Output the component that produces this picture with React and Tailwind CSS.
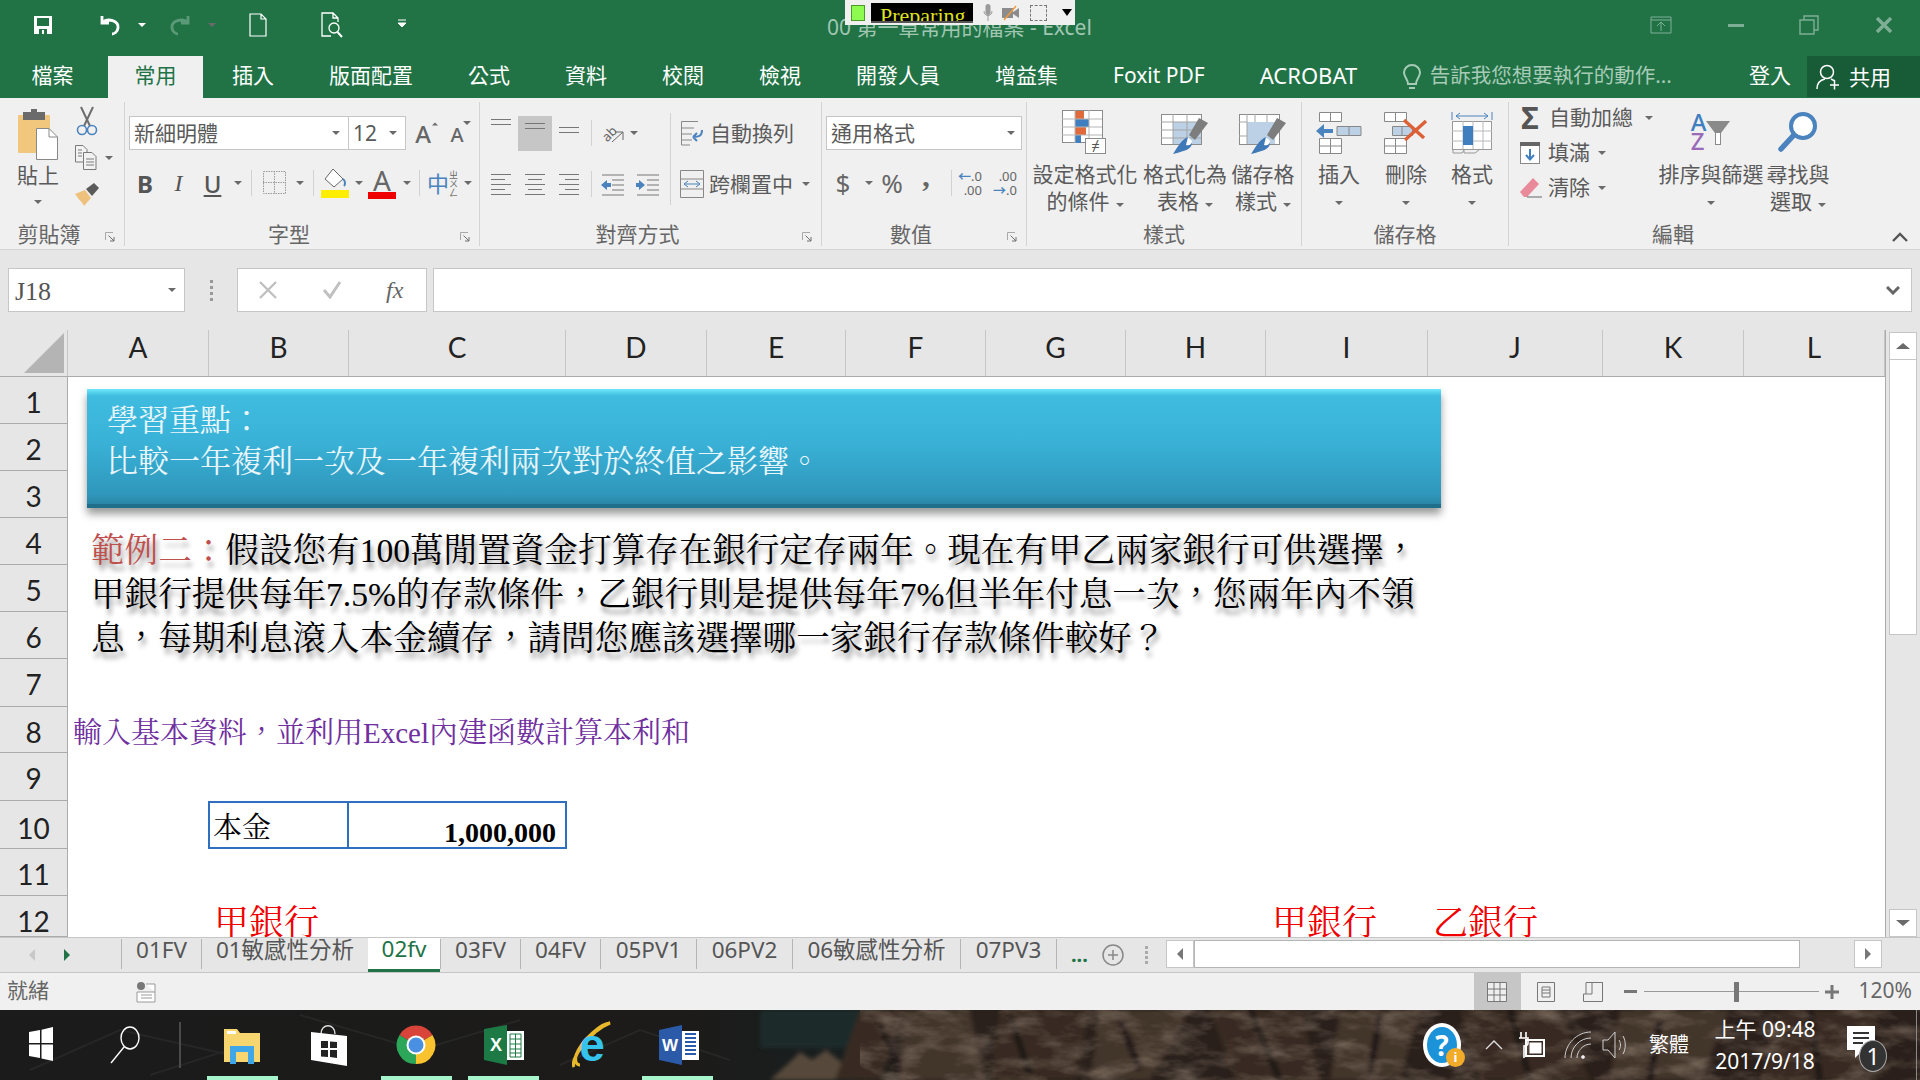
import React from 'react';

const UI = '"Noto Sans","Noto Sans CJK TC",sans-serif';

// little dropdown triangle used all over the ribbon
function Caret({ className = '' }) {
  return <span className={`inline-block w-0 h-0 border-x-[4px] border-t-[4px] border-x-transparent border-t-[#6a6a6a] ${className}`} />;
}

function Launcher() {
  return (
    <svg width="11" height="11" viewBox="0 0 11 11" className="absolute right-[8px] top-[10px]">
      <path d="M0.5 8V0.5H8" fill="none" stroke="#a8a8a8" />
      <path d="M3.5 3.5L9 9M9 5V9H5" fill="none" stroke="#6f6f6f" />
    </svg>
  );
}

function Group({ width, label, launcher, children, last }) {
  return (
    <div className={`${width} h-full shrink-0 flex flex-col ${last ? '' : 'border-r border-[#d4d4d4]'}`}>
      <div className="h-[120px] shrink-0">{children}</div>
      <div className={`relative h-[24px] text-center text-[21px] leading-[24px] text-[#666] ${launcher ? 'pr-[26px]' : ''}`}>
        {label}
        {launcher && <Launcher />}
      </div>
    </div>
  );
}

function Sep({ className = 'h-[26px]' }) {
  return <span className={`w-px bg-[#d2d2d2] shrink-0 ${className}`} />;
}

function Lines({ rows, align = 'left' }) {
  // paragraph alignment glyphs: rows is a list of line widths
  return (
    <svg width="24" height="26" viewBox="0 0 24 26">
      {rows.map((r, i) => {
        const x = align === 'left' ? 2 : align === 'right' ? 22 - r : 12 - r / 2;
        return <rect key={i} x={x} y={3 + i * 5} width={r} height="1" fill="#777" />;
      })}
    </svg>
  );
}

function Cut() {
  return (
    <svg width="24" height="32" viewBox="0 0 24 32">
      <path d="M6 2L15 21M18 2L9 21" stroke="#6d6d6d" strokeWidth="2" fill="none" />
      <circle cx="7" cy="25" r="4.5" fill="none" stroke="#4a83bd" strokeWidth="1.6" />
      <circle cx="17" cy="25" r="4.5" fill="none" stroke="#4a83bd" strokeWidth="1.6" />
    </svg>
  );
}

function Copy() {
  return (
    <svg width="24" height="28" viewBox="0 0 24 28" fill="#f2f2f2" stroke="#7a7a7a">
      <path d="M1.5 1.5H9l4 4V18H1.5z" />
      <path d="M9.5 8.5H18l4 4V25.5H9.5z" />
      <path d="M12 15h8M12 18h8M12 21h8M4 6h4M4 9h4M4 12h4" />
    </svg>
  );
}

function Painter() {
  return (
    <svg width="28" height="26" viewBox="0 0 28 26">
      <path d="M1 13L11 9L17 17L10 25C8 21 5 19 1 13Z" fill="#eec27c" />
      <path d="M12 8L20 2L25 7L18 15Z" fill="#5a5a5a" />
    </svg>
  );
}

function Paste() {
  return (
    <svg width="44" height="52" viewBox="0 0 44 52">
      <rect x="2" y="6" width="32" height="38" rx="1" fill="#f0c77d" />
      <rect x="7" y="3" width="22" height="8" fill="#6b6b6b" />
      <rect x="15" y="0" width="6" height="5" fill="#6b6b6b" />
      <path d="M20.5 19.5H33L41.5 28V50.5H20.5Z" fill="#fff" stroke="#888" />
      <path d="M33 19.5V28H41.5" fill="none" stroke="#888" />
    </svg>
  );
}

function CondFmt() {
  return (
    <svg width="50" height="46" viewBox="0 0 50 46">
      <rect x="0.5" y="0.5" width="40" height="32" fill="#fff" stroke="#8c8c8c" />
      <rect x="13" y="1" width="9" height="8" fill="#e06a3c" />
      <rect x="13" y="9" width="14" height="8" fill="#3f7fbf" />
      <rect x="13" y="17" width="11" height="8" fill="#e06a3c" />
      <rect x="13" y="25" width="6" height="8" fill="#3f7fbf" />
      <path d="M0 9h40M0 17h40M0 25h40M13 0v33M27 0v33" stroke="#b5b5b5" fill="none" />
      <rect x="23.5" y="28.5" width="20" height="15" fill="#fff" stroke="#8c8c8c" />
      <text x="33.5" y="41" fontSize="15" textAnchor="middle" fill="#555">≠</text>
    </svg>
  );
}

function TableFmt({ plain }) {
  return (
    <svg width="48" height="46" viewBox="0 0 48 46">
      <rect x="0.5" y="4.5" width="40" height="30" fill="#fff" stroke="#8c8c8c" />
      <rect x={plain ? 8 : 12} y="12" width="28" height="22" fill="#bcd0e6" />
      {plain
        ? <path d="M0 12h8M8 0M0 26h8M8 4v30M28 4v8M16 4v8" stroke="#a5a5a5" fill="none" />
        : <path d="M0 12h40M0 20h40M0 28h40M12 4v30M26 4v30" stroke="#a5a5a5" fill="none" />}
      <path d="M38 8L47 13L34 30L28 25Z" fill="#7d7d7d" />
      <path d="M27 27L31 33C31 39 24 41 12 44C16 38 20 30 27 27Z" fill="#3f79b8" />
      <path d="M27 27L31 31C31 35 27 36 25 35Z" fill="#fff" />
    </svg>
  );
}

function InsertIcon() {
  return (
    <svg width="46" height="44" viewBox="0 0 46 44">
      <path d="M3.5 1.5h22v9h-22zM14.5 1v9" fill="#fff" stroke="#888" />
      <path d="M21 15.5h24v9h-24zM33 15v9" fill="#bcd0e6" stroke="#888" />
      <path d="M0 20L8 13V18H17V22H8V27Z" fill="#4a83bd" />
      <path d="M3.5 27.5h22v15h-22zM14.5 27v15M3 35h22" fill="#fff" stroke="#888" />
    </svg>
  );
}

function DeleteIcon() {
  return (
    <svg width="46" height="44" viewBox="0 0 46 44">
      <path d="M1.5 1.5h22v9h-22zM12.5 1v9" fill="#fff" stroke="#888" />
      <path d="M9.5 15.5h20v9h-20zM19 15v9" fill="#bcd0e6" stroke="#888" />
      <path d="M1.5 27.5h22v15h-22zM12.5 27v15M1 35h22" fill="#fff" stroke="#888" />
      <path d="M21 9L41 27M43 10L22 29" stroke="#dc6137" strokeWidth="3.4" fill="none" />
    </svg>
  );
}

function FormatIcon() {
  return (
    <svg width="42" height="44" viewBox="0 0 42 44">
      <path d="M1 1v8M41 1v8M5 5h32M5 5l4-3M5 5l4 3M37 5l-4-3M37 5l-4 3" stroke="#4a83bd" fill="none" />
      <rect x="1.5" y="10.5" width="39" height="28" fill="#fff" stroke="#999" />
      <path d="M1 20h40M1 30h40M12 10v28M22 10v28M32 10v28" stroke="#b8b8b8" fill="none" />
      <rect x="12" y="15" width="10" height="19" fill="#3f7fbf" />
      <path d="M2 39v3h9l2-3M13 39v3h11l4-3" stroke="#999" fill="none" />
    </svg>
  );
}

function Borders() {
  return (
    <svg width="26" height="26" viewBox="0 0 26 26">
      <path d="M1.5 1.5h22v22h-22zM12.5 1v23M1 12.5h23" fill="none" stroke="#9a9a9a" strokeDasharray="1.5 1" />
    </svg>
  );
}

function FillColor() {
  return (
    <svg width="30" height="30" viewBox="0 0 30 30">
      <path d="M13 1L23 11L14 19L5 11Z" fill="#fff" stroke="#666" />
      <path d="M23 11C26 13 25 17 24 18" stroke="#4a83bd" strokeWidth="2" fill="none" />
      <rect x="1" y="22" width="28" height="8" fill="#ffee00" />
    </svg>
  );
}

function Sort() {
  return (
    <div className="flex items-start h-[42px]">
      <div className="flex flex-col text-[24px] leading-[19px] font-medium pt-[1px]">
        <span className="text-[#3f7fbf]">A</span>
        <span className="text-[#9a6bb8]">Z</span>
      </div>
      <svg width="26" height="30" viewBox="0 0 26 30" className="mt-[9px] -ml-[1px]">
        <path d="M1 1H25L16 13V25H10V13Z" fill="#8a8a8a" />
        <path d="M11 13H15V24H11Z" fill="#fff" />
      </svg>
    </div>
  );
}

function Find() {
  return (
    <svg width="42" height="42" viewBox="0 0 42 42">
      <circle cx="26" cy="15" r="12" fill="#fff" stroke="#4a83bd" strokeWidth="4" />
      <path d="M16 25L4 38" stroke="#4a83bd" strokeWidth="5.5" strokeLinecap="round" />
    </svg>
  );
}

function Win({ size = 24, color = '#fff' }) {
  return (
    <svg width={size} height={size * 1.5} viewBox="0 0 24 36">
      <path d="M0 6L11 4V17H0ZM12.5 3.7L24 1V17H12.5ZM0 18.5H11V32L0 30ZM12.5 18.5H24V35L12.5 32.5Z" fill={color} />
    </svg>
  );
}

function Wallpaper() {
  const rocks = [
    'M860 0L905 0L880 70L835 70Z', 'M905 0L970 0L985 70L900 70Z', 'M1000 0L1090 0L1075 70L990 70Z',
    'M1100 0L1190 0L1150 70L1090 70Z', 'M1210 0L1300 0L1320 70L1235 70Z', 'M1340 0L1420 0L1400 70L1330 70Z',
    'M1460 0L1560 0L1590 70L1480 70Z', 'M1620 0L1730 0L1700 70L1610 70Z', 'M1780 0L1880 0L1860 70L1760 70Z',
  ];
  return (
    <svg className="absolute inset-0" width="1920" height="70" viewBox="0 0 1920 70" preserveAspectRatio="none">
      <defs>
        <linearGradient id="wallFade" x1="0" x2="1" y1="0" y2="0">
          <stop offset="0" stopColor="#1b1b1b" />
          <stop offset="0.36" stopColor="#1c1b1a" />
          <stop offset="0.44" stopColor="#191f1f" />
          <stop offset="0.47" stopColor="#2a211c" />
          <stop offset="1" stopColor="#2a1f1a" />
        </linearGradient>
        <filter id="wallSoft"><feGaussianBlur stdDeviation="2" /></filter>
        <filter id="wallGrain" x="0" y="0" width="100%" height="100%">
          <feTurbulence type="fractalNoise" baseFrequency="0.025 0.06" numOctaves="4" seed="7" />
          <feColorMatrix values="0 0 0 0 0.30  0 0 0 0 0.23  0 0 0 0 0.18  1.3 0 0 0 -0.55" />
        </filter>
      </defs>
      <rect width="1920" height="70" fill="url(#wallFade)" />
      <g filter="url(#wallSoft)">
        <rect x="760" width="100" height="38" fill="#1a2c2b" />
        <path d="M770 70L790 52L800 42L812 50L826 40L845 55L860 70Z" fill="#57483b" />
        {rocks.map((d, i) => <path key={i} d={d} fill={i % 2 ? '#43352b' : '#382b23'} />)}
        <path d="M880 15L900 60M1010 5L1030 65M1120 10L1140 60M1250 0L1280 70M1380 5L1370 65M1510 0L1530 70M1660 10L1650 70M1810 0L1820 70" stroke="#1f1713" strokeWidth="6" fill="none" />
      </g>
      <rect x="860" width="1060" height="70" filter="url(#wallGrain)" />
      <path d="M30 60L120 20L230 45M300 5L420 40L520 10M560 55L640 20L730 50M150 65L260 30" stroke="#262626" strokeWidth="2" fill="none" />
      <rect x="1916" width="1" height="70" fill="#8a8a8a" />
    </svg>
  );
}

const ROWS = [
  { n: 1, h: 'h-[47px]' }, { n: 2, h: 'h-[47px]' }, { n: 3, h: 'h-[47px]' }, { n: 4, h: 'h-[47px]' },
  { n: 5, h: 'h-[47px]' }, { n: 6, h: 'h-[47px]' }, { n: 7, h: 'h-[48px]' }, { n: 8, h: 'h-[46px]' },
  { n: 9, h: 'h-[48px]' }, { n: 10, h: 'h-[48px]' }, { n: 11, h: 'h-[47px]' }, { n: 12, h: 'h-[41px]' },
];

const COLS = [
  ['A', 'w-[141px]'], ['B', 'w-[140px]'], ['C', 'w-[217px]'], ['D', 'w-[141px]'], ['E', 'w-[139px]'], ['F', 'w-[140px]'],
  ['G', 'w-[140px]'], ['H', 'w-[140px]'], ['I', 'w-[162px]'], ['J', 'w-[175px]'], ['K', 'w-[141px]'], ['L', 'w-[141px]'],
];

const TABS = [
  ['01FV', 'w-[80px]'], ['01敏感性分析', 'w-[167px]'], ['02fv', 'w-[72px]', true], ['03FV', 'w-[80px]'], ['04FV', 'w-[80px]'],
  ['05PV1', 'w-[96px]'], ['06PV2', 'w-[96px]'], ['06敏感性分析', 'w-[168px]'], ['07PV3', 'w-[96px]'],
];

const SERIF = { fontFamily: '"Liberation Serif","Noto Serif CJK TC","Noto Sans CJK TC",serif' };

export default function App() {
  return (
    <div className="w-[1920px] h-[1080px] overflow-hidden flex flex-col bg-[#e6e6e6] text-[#555]" style={{ fontFamily: UI }}>
      {/* title bar */}
      <div className="relative h-[56px] shrink-0 bg-[#217346] flex items-center pb-[6px] text-white">
        <div className="w-[84px] flex justify-end pr-[31px]">
          <svg width="20" height="20" viewBox="0 0 20 20">
            <path d="M1 1H19V19H1Z" fill="#fff" />
            <rect x="4" y="3" width="12" height="8" fill="#217346" />
            <rect x="6" y="14" width="8" height="5" fill="#217346" />
            <rect x="9" y="15" width="2" height="4" fill="#fff" />
          </svg>
        </div>
        <div className="ml-[6px] w-[40px] flex justify-center">
          <svg width="24" height="24" viewBox="0 0 24 24" fill="none" stroke="#fff" strokeWidth="2.8">
            <path d="M4 3V10H11M4 10C10 4 21 8 20 15C19.5 19 16 21 14 21" />
          </svg>
        </div>
        <Caret className="ml-[8px] border-t-white" />
        <div className="w-[22px]" />
        <svg width="24" height="24" viewBox="0 0 24 24" fill="none" stroke="#5b9a78" strokeWidth="2.8">
          <path d="M20 3V10H13M20 10C14 4 3 8 4 15C4.5 19 8 21 10 21" />
        </svg>
        <Caret className="ml-[16px] border-t-[#5b9a78]" />
        <div className="w-[33px]" />
        <svg width="18" height="24" viewBox="0 0 18 24" fill="none" stroke="#fff" strokeWidth="1.2">
          <path d="M1 1H12L17 6V23H1ZM12 1V6H17" />
        </svg>
        <div className="w-[54px]" />
        <svg width="24" height="26" viewBox="0 0 24 26" fill="none" stroke="#fff" strokeWidth="1.3">
          <path d="M10 24H1V1H12L17 6V10M12 1V6H17" />
          <circle cx="13" cy="16" r="5" />
          <path d="M16.5 20L21 25" strokeWidth="2" />
        </svg>
        <div className="w-[52px]" />
        <svg width="10" height="12" viewBox="0 0 10 12"><path d="M1 1H9M1 4L5 8L9 4Z" stroke="#fff" fill="#fff" /></svg>
        <div className="ml-[420px] mt-[6px] text-[21px] text-[#a0c6b2] whitespace-nowrap">00 第一章常用的檔案 - Excel</div>
        <div className="ml-auto flex items-center pr-[28px] text-[#7fae96]">
          <svg width="22" height="18" viewBox="0 0 22 18" fill="none" stroke="#7fae96"><path d="M1 1H21V17H1ZM1 4H21M11 15V7M7 10L11 6L15 10" /></svg>
          <span className="w-[32px] h-[3px] bg-[#7fae96] ml-[48px] scale-x-[.5]" />
          <svg width="20" height="20" viewBox="0 0 20 20" fill="none" stroke="#7fae96" strokeWidth="1.4" className="ml-[47px]"><path d="M5 5V1H19V15H15M1 5H15V19H1Z" /></svg>
          <svg width="16" height="16" viewBox="0 0 16 16" stroke="#7fae96" strokeWidth="3.4" className="ml-[57px]"><path d="M1 1L15 15M15 1L1 15" /></svg>
        </div>
        {/* screen recorder widget over the title */}
        <div className="absolute left-[845px] top-0 w-[230px] h-[25px] bg-[#f0f0f0] flex items-center">
          <span className="ml-[6px] w-[14px] h-[16px] bg-[#8dfb4f] border border-[#4d9a2a]" />
          <div className="ml-[6px] w-[102px] h-[20px] bg-black border-b-2 border-[#555] overflow-hidden text-[#dfe020] text-[22px] leading-[26px] pl-[9px]" style={SERIF}>
            Preparing
          </div>
          <svg width="10" height="18" viewBox="0 0 10 18" className="ml-[10px]"><rect x="2.5" y="0" width="5" height="11" rx="2.5" fill="#9a9a9a" /><path d="M5 11V17M1 7C1 13 9 13 9 7" stroke="#9a9a9a" fill="none" /></svg>
          <svg width="18" height="16" viewBox="0 0 18 16" className="ml-[9px]"><rect y="3" width="11" height="10" fill="#8c8c8c" /><path d="M11 7L17 3V13L11 9Z" fill="#8c8c8c" /><path d="M2 15L14 1" stroke="#ee9a3c" strokeWidth="1.5" /></svg>
          <span className="ml-[10px] w-[17px] h-[16px] border border-dashed border-[#777]" />
          <Caret className="ml-[15px] border-x-[5px] border-t-[7px] border-t-black" />
        </div>
      </div>

      {/* tabs */}
      <div className="h-[42px] shrink-0 bg-[#217346] flex items-stretch text-[21px] text-white leading-[38px]">
        <div className="ml-[5px] mr-[8px] px-[26.5px]">檔案</div>
        <div className="px-[26.5px] mr-[1.5px] bg-[#f0f0f0] text-[#217346]">常用</div>
        {['插入', '版面配置', '公式', '資料', '校閱', '檢視', '開發人員', '增益集', 'Foxit PDF'].map(t => (
          <div key={t} className="px-[27.5px] whitespace-nowrap">{t}</div>
        ))}
        <div className="px-[27.5px] text-[22px] whitespace-nowrap">ACROBAT</div>
        <svg width="20" height="28" viewBox="0 0 20 28" fill="none" stroke="#a7cbb7" strokeWidth="2" className="ml-[17px] mt-[8px]">
          <path d="M6 20C6 15 2 13 2 8.5A8 7.5 0 0 1 18 8.5C18 13 14 15 14 20ZM7 24H13" />
        </svg>
        <div className="ml-[8px] text-[20.5px] text-[#a7cbb7] whitespace-nowrap">告訴我您想要執行的動作...</div>
        <div className="ml-auto mr-[16px]">登入</div>
        <div className="w-[113px] bg-[#185c37] flex items-center mb-[1px]">
          <svg width="24" height="26" viewBox="0 0 24 26" fill="none" stroke="#fff" strokeWidth="1.5" className="ml-[9px]">
            <circle cx="11" cy="8" r="6.5" />
            <path d="M1 25C1 19 4 16 9 15M15 15L19 17M14 21H23M18.5 16.5V25.5" />
          </svg>
          <span className="ml-[9px]">共用</span>
        </div>
      </div>

      {/* ribbon */}
      <div className="h-[152px] shrink-0 bg-[#f0f0f0] border-b border-[#d4d4d4] flex pt-[4px] pb-[3px] text-[21px] leading-[27px] text-[#5a5a5a]">
        <Group width="w-[125px]" label="剪貼簿" launcher>
          <div className="flex h-full">
            <div className="w-[74px] flex flex-col items-center pl-[2px] pt-[7px]">
              <Paste />
              <span className="mt-[1px]">貼上</span>
              <Caret className="mt-[11px]" />
            </div>
            <div className="flex flex-col items-start pt-[3px]">
              <div className="ml-[1px]"><Cut /></div>
              <div className="mt-[7px] flex items-center"><Copy /><Caret className="ml-[7px]" /></div>
              <div className="mt-[9px]"><Painter /></div>
            </div>
          </div>
        </Group>

        <Group width="w-[355px]" label="字型" launcher>
          <div className="flex items-center mt-[14px] ml-[4px] h-[34px]">
            <div className="w-[220px] h-full bg-white border border-[#c6c6c6] flex items-center justify-between px-[4px] pr-[8px]">新細明體<Caret /></div>
            <div className="w-[57px] h-full bg-white border border-l-0 border-[#c6c6c6] flex items-center justify-between px-[4px] pr-[8px]">12<Caret /></div>
            <div className="relative w-[34px] text-center text-[24px] font-medium text-[#666]">A<Caret className="absolute right-[1px] top-[2px] rotate-180 border-t-[#4a83bd] scale-75" /></div>
            <div className="relative w-[34px] text-center text-[20px] font-medium text-[#666] pt-[2px]">A<Caret className="absolute right-[3px] top-[2px] border-t-[#4a83bd]" /></div>
          </div>
          <div className="flex items-center mt-[16px] ml-[3px] h-[34px] text-[24px] text-[#555]">
            <span className="w-[34px] text-center font-bold">B</span>
            <span className="w-[33px] text-center italic" style={SERIF}>I</span>
            <span className="w-[35px] text-center underline font-medium">U</span>
            <span className="w-[16px] flex justify-center"><Caret /></span>
            <Sep className="h-[26px] ml-[5px]" />
            <span className="ml-[10px]"><Borders /></span>
            <span className="w-[24px] flex justify-center"><Caret /></span>
            <Sep className="h-[26px] ml-[1px]" />
            <span className="ml-[6px]"><FillColor /></span>
            <span className="w-[18px] flex justify-center"><Caret /></span>
            <div className="flex flex-col items-center w-[28px] text-[28px] leading-[24px] text-[#666]">A<span className="w-full h-[7px] bg-[#ee0000]" /></div>
            <span className="w-[22px] flex justify-center"><Caret /></span>
            <Sep className="h-[26px] ml-[1px]" />
            <div className="ml-[7px] flex items-center text-[#4a83bd]">
              <span className="text-[22px]">中</span>
              <span className="flex flex-col text-[9px] leading-[9px] text-[#666]"><span>ㄓ</span><span>ㄨ</span><span>ㄥ</span></span>
            </div>
            <span className="ml-[6px] flex justify-center"><Caret /></span>
          </div>
        </Group>

        <Group width="w-[342px]" label="對齊方式" launcher>
          <div className="flex h-full">
            <div className="w-[190px] shrink-0">
              <div className="flex items-center mt-[13px] ml-[4px] h-[36px]">
                <span className="w-[34px] flex justify-center -mt-[8px]"><Lines rows={[20, 20]} align="center" /></span>
                <span className="w-[34px] h-[35px] flex items-center justify-center bg-[#c6c6c6]"><Lines rows={[20, 20]} align="center" /></span>
                <span className="w-[34px] flex justify-center mt-[8px]"><Lines rows={[20, 20]} align="center" /></span>
                <Sep className="h-[26px] ml-[5px]" />
                <svg width="26" height="26" viewBox="0 0 26 26" fill="none" className="ml-[8px]">
                  <text x="2" y="18" fontSize="13" fill="#666" transform="rotate(-45 10 14)">ab</text>
                  <path d="M12 22L23 12M23 12V20M23 12H15" stroke="#666" />
                </svg>
                <span className="ml-[4px] flex"><Caret /></span>
              </div>
              <div className="flex items-center mt-[15px] ml-[4px] h-[36px]">
                <span className="w-[34px] flex justify-center"><Lines rows={[20, 14, 20, 14, 20]} /></span>
                <span className="w-[34px] flex justify-center"><Lines rows={[20, 14, 20, 14, 20]} align="center" /></span>
                <span className="w-[34px] flex justify-center"><Lines rows={[20, 14, 20, 14, 20]} align="right" /></span>
                <Sep className="h-[26px] ml-[5px]" />
                <svg width="26" height="26" viewBox="0 0 26 26" className="ml-[8px]">
                  <path d="M2 4H24M12 9H24M12 14H24M12 19H24M2 24H24" stroke="#777" fill="none" />
                  <path d="M1 14L7 9V12H11V16H7V19Z" fill="#4a83bd" />
                </svg>
                <svg width="26" height="26" viewBox="0 0 26 26" className="ml-[9px]">
                  <path d="M2 4H24M12 9H24M12 14H24M12 19H24M2 24H24" stroke="#777" fill="none" />
                  <path d="M10 14L4 9V12H1V16H4V19Z" fill="#4a83bd" />
                </svg>
              </div>
            </div>
            <Sep className="h-[92px] mt-[11px]" />
            <div className="flex-1">
              <div className="flex items-center mt-[13px] ml-[9px] h-[36px]">
                <svg width="24" height="26" viewBox="0 0 24 26" fill="none" className="mr-[6px]">
                  <path d="M1.5 1.5H18M1.5 1.5V25H10M1.5 8H14M1.5 14H12M1.5 20H12" stroke="#888" />
                  <path d="M22 10C22 16 19 17 13 17M13 17L17 13M13 17L17 21" stroke="#4a83bd" strokeWidth="2" />
                </svg>
                自動換列
              </div>
              <div className="flex items-center mt-[15px] ml-[9px] h-[36px]">
                <svg width="24" height="28" viewBox="0 0 24 28" fill="none" className="mr-[5px]">
                  <path d="M.5 .5H23.5V27.5H.5ZM0 9H24M0 19H24" stroke="#888" />
                  <path d="M4 14H20M4 14L8 11M4 14L8 17M20 14L16 11M20 14L16 17" stroke="#4a83bd" />
                </svg>
                跨欄置中
                <Caret className="ml-[9px]" />
              </div>
            </div>
          </div>
        </Group>

        <Group width="w-[205px]" label="數值" launcher>
          <div className="ml-[4px] mt-[14px] w-[196px] h-[34px] bg-white border border-[#c6c6c6] flex items-center justify-between px-[4px] pr-[6px]">通用格式<Caret /></div>
          <div className="flex items-center mt-[16px] ml-[8px] h-[34px] text-[#666]">
            <span className="w-[26px] text-center text-[26px]">$</span>
            <Caret className="ml-[9px]" />
            <span className="ml-[2px] w-[34px] text-center text-[26px]">%</span>
            <span className="w-[34px] text-center text-[30px] font-bold leading-[16px] pb-[15px]" style={SERIF}>,</span>
            <Sep className="h-[26px] ml-[8px]" />
            <span className="ml-[2px] w-[28px] flex flex-col items-end text-[13px] leading-[14px]"><span><span className="text-[#4a83bd] font-bold">←</span>.0</span><span>.00</span></span>
            <span className="ml-[7px] w-[28px] flex flex-col items-end text-[13px] leading-[14px]"><span>.00</span><span><span className="text-[#4a83bd] font-bold">→</span>.0</span></span>
          </div>
        </Group>

        <Group width="w-[275px]" label="樣式">
          <div className="flex ml-[3px] text-center">
            <div className="w-[110px] flex flex-col items-center pt-[8px]"><div className="h-[48px] pl-[4px]"><CondFmt /></div><div className="mt-[3px] whitespace-nowrap">設定格式化</div><div>的條件<Caret className="ml-[6px] mb-[2px]" /></div></div>
            <div className="w-[90px] flex flex-col items-center pt-[8px]"><div className="h-[48px]"><TableFmt /></div><div className="mt-[3px] whitespace-nowrap">格式化為</div><div>表格<Caret className="ml-[6px] mb-[2px]" /></div></div>
            <div className="w-[66px] flex flex-col items-center pt-[8px]"><div className="h-[48px]"><TableFmt plain /></div><div className="mt-[3px] whitespace-nowrap">儲存格</div><div>樣式<Caret className="ml-[6px] mb-[2px]" /></div></div>
          </div>
        </Group>

        <Group width="w-[207px]" label="儲存格">
          <div className="flex ml-[3px] text-center">
            <div className="w-[68px] flex flex-col items-center pt-[9px]"><div className="h-[47px]"><InsertIcon /></div><div className="mt-[3px]">插入</div><Caret className="mt-[13px]" /></div>
            <div className="w-[66px] flex flex-col items-center pt-[9px]"><div className="h-[47px]"><DeleteIcon /></div><div className="mt-[3px]">刪除</div><Caret className="mt-[13px]" /></div>
            <div className="w-[66px] flex flex-col items-center pt-[9px]"><div className="h-[47px]"><FormatIcon /></div><div className="mt-[3px]">格式</div><Caret className="mt-[13px]" /></div>
          </div>
        </Group>

        <Group width="w-[328px]" label="編輯" last>
          <div className="flex h-full">
            <div className="w-[149px] shrink-0">
              <div className="h-[35px] flex items-center -mt-[2px]"><span className="w-[22px] ml-[10px] text-center text-[30px] leading-[30px] font-bold text-[#555]">Σ</span><span className="ml-[8px]">自動加總</span><Caret className="ml-[12px]" /></div>
              <div className="h-[35px] flex items-center">
                <svg width="20" height="22" viewBox="0 0 20 22" className="ml-[11px]">
                  <rect x=".5" y=".5" width="19" height="21" fill="#fff" stroke="#888" />
                  <rect width="20" height="4" fill="#666" />
                  <path d="M10 7V17M6 13L10 17.5L14 13" stroke="#3f7fbf" strokeWidth="2" fill="none" />
                </svg>
                <span className="ml-[8px]">填滿</span><Caret className="ml-[8px]" />
              </div>
              <div className="h-[35px] flex items-center">
                <svg width="24" height="24" viewBox="0 0 24 24" className="ml-[10px]">
                  <path d="M1 16L14 2L20 8L8 21H5Z" fill="#e98a9a" />
                  <path d="M8 21H23" stroke="#666" />
                </svg>
                <span className="ml-[5px]">清除</span><Caret className="ml-[8px]" />
              </div>
            </div>
            <div className="w-[106px] flex flex-col items-center pt-[9px]"><div className="h-[47px]"><Sort /></div><div className="mt-[3px] whitespace-nowrap">排序與篩選</div><Caret className="mt-[13px]" /></div>
            <div className="w-[66px] ml-[1px] flex flex-col items-center pt-[9px]"><div className="h-[47px]"><Find /></div><div className="mt-[3px] whitespace-nowrap">尋找與</div><div>選取<Caret className="ml-[6px] mb-[2px]" /></div></div>
          </div>
        </Group>
        <div className="flex-1 flex items-end justify-end pr-[12px] pb-[4px]">
          <svg width="16" height="10" viewBox="0 0 16 10"><path d="M1 9L8 2L15 9" fill="none" stroke="#555" strokeWidth="2.4" /></svg>
        </div>
      </div>

      {/* formula bar */}
      <div className="h-[80px] shrink-0 flex items-center">
        <div className="ml-[8px] w-[177px] h-[44px] bg-white border border-[#c6c6c6] flex items-center justify-between pl-[6px] pr-[8px] text-[26px] text-[#555]" style={SERIF}>
          <span className="pt-[3px]">J18</span><Caret />
        </div>
        <div className="w-[52px] flex flex-col items-center gap-[3px]"><span className="w-[3px] h-[3px] bg-[#999]" /><span className="w-[3px] h-[3px] bg-[#999]" /><span className="w-[3px] h-[3px] bg-[#999]" /><span className="w-[3px] h-[3px] bg-[#999]" /></div>
        <div className="w-[190px] h-[44px] bg-white border border-[#c6c6c6] flex items-center text-[#8a8a8a]">
          <svg width="18" height="18" viewBox="0 0 18 18" className="ml-[21px]"><path d="M1 1L17 17M17 1L1 17" stroke="#c0c0c0" strokeWidth="2.4" /></svg>
          <svg width="20" height="18" viewBox="0 0 20 18" className="ml-[45px]"><path d="M2 9L8 16L18 1" stroke="#c0c0c0" strokeWidth="3" fill="none" /></svg>
          <span className="ml-[44px] italic text-[24px] text-[#666]" style={SERIF}>fx</span>
        </div>
        <div className="ml-[6px] w-[1479px] h-[44px] bg-white border border-[#c6c6c6] flex items-center justify-end pr-[11px]">
          <svg width="14" height="9" viewBox="0 0 14 9"><path d="M1 1L7 7L13 1" fill="none" stroke="#666" strokeWidth="3" /></svg>
        </div>
      </div>

      {/* sheet plus vertical scrollbar */}
      <div className="h-[607px] shrink-0 flex">
        <div className="w-[1885px] shrink-0 flex flex-col overflow-hidden">
          <div className="h-[47px] shrink-0 flex border-b border-[#ababab] text-[#222]" style={{ fontFamily: 'Lato,sans-serif' }}>
            <div className="w-[68px] shrink-0 border-r border-[#c6c6c6] flex items-end justify-end p-[3px]">
              <svg width="40" height="40" viewBox="0 0 40 40"><path d="M40 0V40H0Z" fill="#b4b4b4" /></svg>
            </div>
            {COLS.map(([c, w]) => (
              <div key={c} className={`${w} shrink-0 border-r border-[#c6c6c6] text-center text-[28px] leading-[35px]`}>{c}</div>
            ))}
          </div>
          <div className="relative flex-1 flex flex-col">
            {ROWS.map(r => (
              <div key={r.n} className={`${r.h} shrink-0 flex`}>
                <div className={`w-[68px] shrink-0 bg-[#e6e6e6] border-r border-b border-[#ababab] text-center text-[#222] text-[28px] ${r.n === 10 ? 'leading-[54px]' : 'leading-[50px]'}`} style={{ fontFamily: 'Lato,sans-serif' }}>{r.n}</div>
                <div className="flex-1 bg-white overflow-hidden flex text-black" style={SERIF}>
                  {r.n === 8 && <div className="ml-[5px] text-[29px] leading-[52px] text-[#7030a0] whitespace-nowrap">輸入基本資料，並利用Excel內建函數計算本利和</div>}
                  {r.n === 10 && (
                    <div className="ml-[140px] w-[359px] h-[48px] flex border-2 border-[#2f6fc0]">
                      <div className="w-[139px] border-r-2 border-[#2f6fc0] pl-[3px] text-[29px] leading-[50px]">本金</div>
                      <div className="flex-1 text-right pr-[9px] pt-[11px] text-[28px] leading-[38px] font-bold">1,000,000</div>
                    </div>
                  )}
                  {r.n === 12 && (
                    <div className="flex text-[35px] leading-[56px] text-[#f00000] whitespace-nowrap">
                      <div className="ml-[146px] w-[1058px]">甲銀行</div>
                      <div className="w-[161px]">甲銀行</div>
                      <div>乙銀行</div>
                    </div>
                  )}
                </div>
              </div>
            ))}
            {/* floating shape and text box from the worksheet */}
            <div className="absolute left-[87px] top-[12px] w-[1354px] h-[119px] pl-[20px] pt-[11px] text-[31px] leading-[41px] text-[#e8f6fb] bg-[linear-gradient(180deg,#6ee8fa_0%,#3fbce0_6%,#3ab2d8_45%,#2f97bb_92%,#2a86a6_100%)] border-b-[4px] border-[#1f6f8c] shadow-[0_6px_8px_rgba(0,0,0,0.4)]" style={SERIF}>
              <div>學習重點：</div>
              <div>比較一年複利一次及一年複利兩次對於終值之影響。</div>
            </div>
            <div className="absolute left-[91px] top-[152px] w-[1340px] text-[33.6px] leading-[44px] text-black [text-shadow:2px_6px_5px_rgba(0,0,0,0.45)]" style={SERIF}>
              <div className="whitespace-nowrap"><span className="text-[#c0504d]">範例二：</span>假設您有100萬閒置資金打算存在銀行定存兩年。現在有甲乙兩家銀行可供選擇，</div>
              <div className="whitespace-nowrap">甲銀行提供每年7.5%的存款條件，乙銀行則是提供每年7%但半年付息一次，您兩年內不領</div>
              <div className="whitespace-nowrap">息，每期利息滾入本金續存，請問您應該選擇哪一家銀行存款條件較好？</div>
            </div>
          </div>
        </div>
        <div className="flex-1 flex flex-col items-start pl-[3px] pt-[2px] border-l border-[#ababab]">
          <div className="w-[28px] h-[28px] bg-white border border-[#c6c6c6] flex items-center justify-center"><Caret className="rotate-180 border-x-[7px] border-t-[6px]" /></div>
          <div className="w-[28px] h-[275px] bg-white border-x border-b border-[#c6c6c6]" />
          <div className="flex-1" />
          <div className="w-[28px] h-[28px] bg-white border border-[#c6c6c6] flex items-center justify-center"><Caret className="border-x-[7px] border-t-[6px]" /></div>
        </div>
      </div>

      {/* sheet tabs */}
      <div className="h-[36px] shrink-0 flex items-stretch border-t border-b border-[#c6c6c6] text-[22.5px] text-[#555]">
        <div className="w-[121px] shrink-0 flex items-center">
          <span className="ml-[29px] w-0 h-0 border-y-[6px] border-r-[6px] border-y-transparent border-r-[#c8c8c8]" />
          <span className="ml-[29px] w-0 h-0 border-y-[6px] border-l-[6px] border-y-transparent border-l-[#217346]" />
        </div>
        {TABS.map(([name, w, active]) => (
          <div key={name} className={`${w} shrink-0 text-center leading-[22px] whitespace-nowrap ${active ? 'bg-white text-[#217346] border-b-[3px] border-[#217346] h-[34px]' : 'border-l border-[#b5b5b5] h-[30px] mt-[1px]'}`}>{name}</div>
        ))}
        <span className="w-[1px] h-[30px] mt-[1px] bg-[#b5b5b5]" />
        <span className="ml-[14px] text-[20px] text-[#217346] font-bold leading-[34px]">...</span>
        <svg width="22" height="22" viewBox="0 0 22 22" className="ml-[14px] mt-[6px]" fill="none" stroke="#888" strokeWidth="1.5"><circle cx="11" cy="11" r="10" /><path d="M6 11H16M11 6V16" /></svg>
        <div className="ml-[21px] mt-[8px] flex flex-col gap-[2px]"><span className="w-[3px] h-[3px] bg-[#aaa]" /><span className="w-[3px] h-[3px] bg-[#aaa]" /><span className="w-[3px] h-[3px] bg-[#aaa]" /><span className="w-[3px] h-[3px] bg-[#aaa]" /></div>
        <div className="ml-[18px] mt-[2px] h-[28px] w-[28px] bg-white border border-[#c6c6c6] flex items-center justify-center"><span className="w-0 h-0 border-y-[6px] border-r-[6px] border-y-transparent border-r-[#777]" /></div>
        <div className="mt-[2px] h-[28px] w-[606px] bg-white border border-[#b5b5b5]" />
        <div className="w-[54px]" />
        <div className="mt-[2px] h-[28px] w-[28px] bg-white border border-[#c6c6c6] flex items-center justify-center"><span className="w-0 h-0 border-y-[6px] border-l-[6px] border-y-transparent border-l-[#777]" /></div>
      </div>

      {/* status bar */}
      <div className="h-[37px] shrink-0 bg-[#f0f0f0] flex items-center text-[21px] text-[#666]">
        <span className="ml-[7px] -mt-[2px]">就緒</span>
        <svg width="20" height="22" viewBox="0 0 20 22" className="ml-[87px]">
          <circle cx="5" cy="5" r="4" fill="#777" />
          <path d="M10 3H19V21H1V11H19M5 14H16M5 17H16" fill="#fff" stroke="#999" />
        </svg>
        <div className="ml-auto flex items-center h-full">
          <div className="w-[47px] h-full bg-[#c6c6c6] flex items-center justify-center">
            <svg width="20" height="20" viewBox="0 0 20 20"><path d="M.5 .5H19.5V19.5H.5ZM7 0V20M13 0V20M0 7H20M0 13H20" fill="#eee" stroke="#777" /></svg>
          </div>
          <svg width="18" height="20" viewBox="0 0 18 20" className="ml-[16px]" fill="none" stroke="#777"><path d="M.5 .5H17.5V19.5H.5ZM5 5H13V15H5ZM5 8H13M5 11H13" /></svg>
          <svg width="20" height="20" viewBox="0 0 20 20" className="ml-[28px]" fill="none" stroke="#777"><path d="M.5 12V19.5H19.5V.5H9V12H.5M3 12V.5H19.5" /></svg>
          <span className="ml-[21px] w-[13px] h-[3px] bg-[#777]" />
          <div className="ml-[7px] w-[175px] h-px bg-[#999] flex items-center"><span className="ml-[90px] w-[5px] h-[20px] bg-[#777]" /></div>
          <svg width="14" height="14" viewBox="0 0 14 14" className="ml-[6px]"><path d="M0 7H14M7 0V14" stroke="#777" strokeWidth="3" /></svg>
          <span className="ml-[20px] mr-[8px] -mt-[2px] text-[#666]">120%</span>
        </div>
      </div>

      {/* taskbar */}
      <div className="relative h-[70px] shrink-0 flex items-center text-white">
        <Wallpaper />
        <div className="relative flex items-center h-full w-full">
          <div className="ml-[29px] pb-[2px]"><Win size={24} /></div>
          <svg width="32" height="38" viewBox="0 0 32 38" fill="none" stroke="#fff" strokeWidth="1.4" className="ml-[56px]">
            <ellipse cx="21" cy="12" rx="9" ry="11" />
            <path d="M15 21L2 37" />
          </svg>
          <span className="ml-[38px] w-[2px] h-[46px] bg-[#4a4a4a]" />
          <svg width="38" height="38" viewBox="0 0 38 38" className="ml-[42px]">
            <path d="M1 3H14L17 7H37V36H1Z" fill="#f7d670" />
            <rect x="4" y="5" width="9" height="3" fill="#fff" />
            <path d="M7 38V20H31V38H25V26H13V38Z" fill="#3fa7e8" />
          </svg>
          <svg width="38" height="42" viewBox="0 0 38 42" className="ml-[49px]">
            <path d="M11 10C11 -1 25 -1 25 10" fill="none" stroke="#ddd" strokeWidth="1.4" />
            <path d="M1 8L37 12V42L1 36Z" fill="#fff" />
            <path d="M11 17L18 17V24H11ZM20 17.5L27 18V24H20ZM11 26H18V33L11 32.5ZM20 26H27V34L20 33Z" fill="#222" />
          </svg>
          <svg width="40" height="40" viewBox="0 0 40 40" className="ml-[48px]">
            <path d="M20 20L3.5 10A19 19 0 0 1 36.5 10Z" fill="#d9443a" />
            <path d="M20 20L36.5 10A19 19 0 0 1 20 39Z" fill="#f8c32e" />
            <path d="M20 20L20 39A19 19 0 0 1 3.5 10Z" fill="#2ca75a" />
            <circle cx="20" cy="20" r="9.5" fill="#fff" />
            <circle cx="20" cy="20" r="7.5" fill="#4a90e2" />
          </svg>
          <svg width="42" height="42" viewBox="0 0 42 42" className="ml-[47px]">
            <path d="M1 5L24 1V41L1 36Z" fill="#1d7a45" />
            <path d="M24 7H41V36H24Z" fill="#fff" />
            <path d="M27 10H38V33H27ZM27 15H38M27 20H38M27 25H38M27 29H38M32.5 10V33" fill="none" stroke="#1d7a45" />
            <text x="7" y="27" fontSize="18" fontWeight="700" fill="#fff" fontFamily="Liberation Sans">X</text>
          </svg>
          <div className="relative ml-[47px] w-[40px] h-[48px] flex items-center justify-center">
            <svg width="40" height="48" viewBox="0 0 40 48" className="absolute inset-0"><path d="M2 46C-2 38 18 10 38 2C30 2 10 18 4 34C3 40 4 44 8 44" fill="none" stroke="#e8b82c" strokeWidth="3" /></svg>
            <span className="relative text-[46px] font-bold leading-[46px] text-[#35c3ee]" style={{ fontFamily: '"Liberation Sans",sans-serif' }}>e</span>
          </div>
          <svg width="42" height="42" viewBox="0 0 42 42" className="ml-[46px]">
            <path d="M1 6L24 1V41L1 36Z" fill="#2b5aa8" />
            <path d="M24 7H41V36H24Z" fill="#fff" />
            <path d="M27 10H38M27 14H38M27 18H38M27 22H38M27 26H38M27 30H38" stroke="#2b5aa8" strokeWidth="2" />
            <text x="4" y="27" fontSize="17" fontWeight="700" fill="#fff" fontFamily="Liberation Sans">W</text>
          </svg>

          {/* tray */}
          <div className="ml-auto flex items-center">
            <div className="relative w-[38px] h-[44px] rounded-[50%] bg-white flex items-center justify-center">
              <span className="w-[30px] h-[36px] rounded-[50%] bg-[#1c93d8] text-white text-[28px] font-bold leading-[36px] text-center">?</span>
              <span className="absolute -right-[4px] bottom-0 w-[19px] h-[19px] rounded-full bg-[#f2ac2a] text-[13px] font-bold leading-[19px] text-center">i</span>
            </div>
            <svg width="18" height="10" viewBox="0 0 18 10" className="ml-[24px]"><path d="M1 9L9 1L17 9" fill="none" stroke="#ddd" strokeWidth="1.4" /></svg>
            <svg width="28" height="28" viewBox="0 0 28 28" className="ml-[15px]" fill="none" stroke="#fff">
              <path d="M3 1V7M8 1V7M1 7H10V12C10 15 6 15 6 15V27" strokeWidth="1.6" />
              <rect x="8" y="9" width="18" height="16" strokeWidth="2" />
              <rect x="12" y="12" width="11" height="10" fill="#fff" />
            </svg>
            <svg width="30" height="30" viewBox="0 0 30 30" className="ml-[17px]" fill="none" stroke="#cfcfcf">
              <path d="M2 28C2 14 14 2 28 2M8 28C8 17 17 8 28 8M14 28C14 21 20 14 28 14" />
              <circle cx="20" cy="27" r="1.5" fill="#fff" />
            </svg>
            <svg width="28" height="30" viewBox="0 0 28 30" className="ml-[9px]" fill="none" stroke="#cfcfcf">
              <path d="M1 10H6L13 2V28L6 20H1Z" />
              <path d="M17 10C19 13 19 17 17 20M21 6C24 11 24 19 21 24" />
            </svg>
            <span className="ml-[19px] text-[20px] leading-[22px] w-[40px]">繁體</span>
            <div className="ml-[25px] flex flex-col items-center text-[21px] leading-[32px] w-[102px]">
              <span>上午 09:48</span>
              <span>2017/9/18</span>
            </div>
            <div className="relative ml-[31px] mr-[45px] w-[28px] h-[30px] -mt-[8px]">
              <svg width="28" height="34" viewBox="0 0 28 34"><path d="M0 0H28V24H16L8 32V24H0Z" fill="#fff" /><path d="M6 7H22M6 12H22M6 17H16" stroke="#333" strokeWidth="2" /></svg>
              <span className="absolute left-[12px] top-[14px] w-[28px] h-[32px] rounded-[50%] bg-[#333] border border-[#aaa] text-[23px] leading-[30px] text-center">1</span>
            </div>
          </div>
        </div>
        <div className="absolute left-0 bottom-0 w-full h-[4px] flex">
          <span className="ml-[207px] w-[71px] h-full bg-[#a6f5cc]" />
          <span className="ml-[103px] w-[71px] h-full bg-[#a6f5cc]" />
          <span className="ml-[16px] w-[71px] h-full bg-[#a6f5cc]" />
          <span className="ml-[103px] w-[71px] h-full bg-[#a6f5cc]" />
        </div>
      </div>
    </div>
  );
}
